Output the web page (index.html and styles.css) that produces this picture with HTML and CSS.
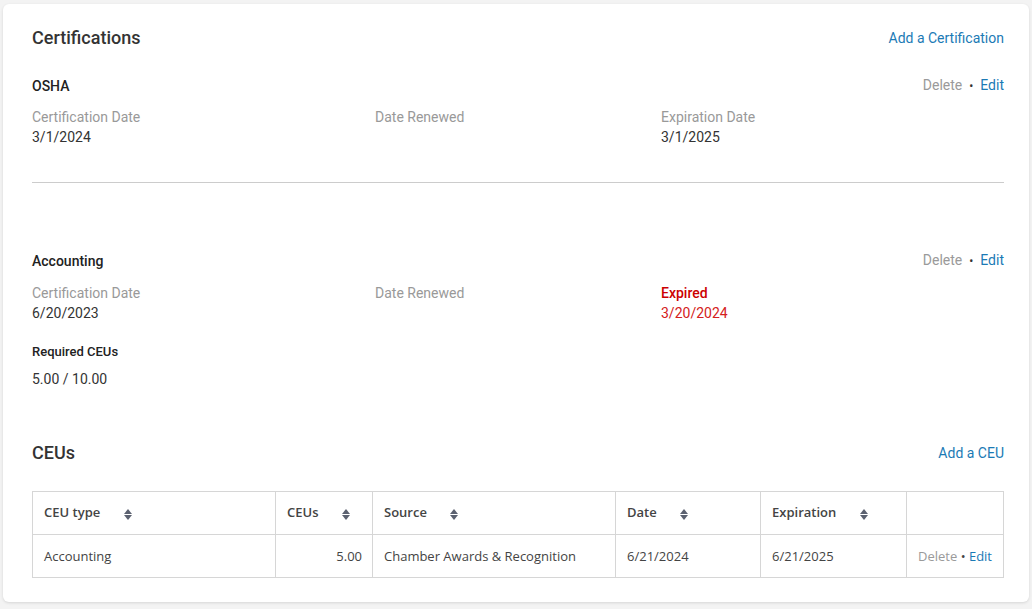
FILE: index.html
```html
<!DOCTYPE html>
<html lang="en">
<head>
    <meta charset="UTF-8">
    <meta name="viewport" content="width=device-width, initial-scale=1.0">
    <title>Certifications</title>
    <link rel="stylesheet" href="styles.css">
</head>
<body>
    <div class="card">
        <!-- Certifications -->
        <div class="section-head">
            <h2>Certifications</h2>
            <a class="link" href="#">Add a Certification</a>
        </div>

        <div class="cert">
            <div class="cert-head">
                <span class="cert-name">OSHA</span>
                <span class="actions"><a class="delete" href="#">Delete</a><span class="dot">&bull;</span><a class="link" href="#">Edit</a></span>
            </div>
            <div class="fields">
                <div>
                    <div class="label">Certification Date</div>
                    <div class="value">3/1/2024</div>
                </div>
                <div>
                    <div class="label">Date Renewed</div>
                </div>
                <div>
                    <div class="label">Expiration Date</div>
                    <div class="value">3/1/2025</div>
                </div>
            </div>
        </div>

        <hr class="divider">

        <div class="cert cert-second">
            <div class="cert-head">
                <span class="cert-name">Accounting</span>
                <span class="actions"><a class="delete" href="#">Delete</a><span class="dot">&bull;</span><a class="link" href="#">Edit</a></span>
            </div>
            <div class="fields fields-second">
                <div>
                    <div class="label">Certification Date</div>
                    <div class="value">6/20/2023</div>
                </div>
                <div>
                    <div class="label">Date Renewed</div>
                </div>
                <div>
                    <div class="label expired">Expired</div>
                    <div class="value expired-date">3/20/2024</div>
                </div>
            </div>
            <div class="required">Required CEUs</div>
            <div class="value required-value">5.00 / 10.00</div>
        </div>

        <!-- CEUs -->
        <div class="section-head ceu-head">
            <h2>CEUs</h2>
            <a class="link" href="#">Add a CEU</a>
        </div>

        <table class="ceu-table">
            <colgroup>
                <col style="width: 243px">
                <col style="width: 97px">
                <col style="width: 243px">
                <col style="width: 145px">
                <col style="width: 146px">
                <col>
            </colgroup>
            <thead>
                <tr>
                    <th>CEU type <span class="sort"></span></th>
                    <th>CEUs <span class="sort"></span></th>
                    <th>Source <span class="sort"></span></th>
                    <th>Date <span class="sort"></span></th>
                    <th>Expiration <span class="sort"></span></th>
                    <th></th>
                </tr>
            </thead>
            <tbody>
                <tr>
                    <td>Accounting</td>
                    <td class="num">5.00</td>
                    <td>Chamber Awards &amp; Recognition</td>
                    <td>6/21/2024</td>
                    <td>6/21/2025</td>
                    <td><a class="delete" href="#">Delete</a> &bull; <a class="link" href="#">Edit</a></td>
                </tr>
            </tbody>
        </table>
    </div>
</body>
</html>
```

FILE: styles.css
```css
body {
    margin: 0;
    padding: 0;
    background-color: #f3f3f3;
    font-family: Roboto, "Liberation Sans", sans-serif;
    font-size: 14px;
    color: #333;
}
a {
    text-decoration: none;
}
.link {
    color: #1b7ab5;
}
.delete {
    color: #9a9a9a;
}
.card {
    margin: 4px 3px 7px 3px;
    padding: 22px 25px 24px 29px;
    background-color: #fff;
    border-radius: 6px;
    box-shadow: 0 1px 3px rgba(0, 0, 0, 0.12);
}
.section-head {
    display: flex;
    justify-content: space-between;
    align-items: center;
    height: 24px;
}
.section-head h2 {
    margin: 0;
    font-size: 18px;
    font-weight: 500;
    line-height: 24px;
    color: #333;
}
.cert {
    margin-top: 25px;
}
.cert-head {
    display: flex;
    justify-content: space-between;
    align-items: center;
    line-height: 20px;
}
.cert-name {
    font-size: 14px;
    font-weight: 500;
    color: #222;
}
.dot {
    color: #333;
    font-size: 12px;
    margin: 0 7px;
}
.fields {
    display: grid;
    grid-template-columns: 343px 286px 1fr;
    margin-top: 11px;
}
.fields-second {
    margin-top: 12px;
}
.label {
    color: #999;
    line-height: 20px;
}
.value {
    line-height: 20px;
}
.expired {
    color: #c00;
    font-weight: 500;
}
.expired-date {
    color: #d42020;
}
.divider {
    border: none;
    border-top: 1px solid #ccc;
    margin: 35px 0 0 0;
}
.cert-second {
    margin-top: 67px;
}
.required {
    margin-top: 19px;
    font-size: 13px;
    font-weight: 500;
    line-height: 20px;
    color: #222;
}
.required-value {
    margin-top: 7px;
}
.ceu-head {
    margin-top: 52px;
}
.ceu-table {
    width: 100%;
    margin-top: 26px;
    border-collapse: collapse;
    table-layout: fixed;
    font-family: "Open Sans", "Liberation Sans", sans-serif;
    font-size: 13px;
    color: #444;
}
.ceu-table th, .ceu-table td {
    border: 1px solid #d6d6d6;
    height: 43px;
    padding: 0 11px;
    text-align: left;
    box-sizing: border-box;
}
.ceu-table th {
    font-weight: 600;
    padding-bottom: 2px;
}
.ceu-table td.num {
    text-align: right;
    padding-right: 10px;
}
.sort {
    display: inline-block;
    position: relative;
    width: 8px;
    height: 11px;
    margin-left: 20px;
    vertical-align: -3px;
}
.sort::before, .sort::after {
    content: "";
    position: absolute;
    left: 0;
    border-left: 4px solid transparent;
    border-right: 4px solid transparent;
}
.sort::before {
    top: 0;
    border-bottom: 5px solid #5b6170;
}
.sort::after {
    bottom: 0;
    border-top: 5px solid #5b6170;
}
```
